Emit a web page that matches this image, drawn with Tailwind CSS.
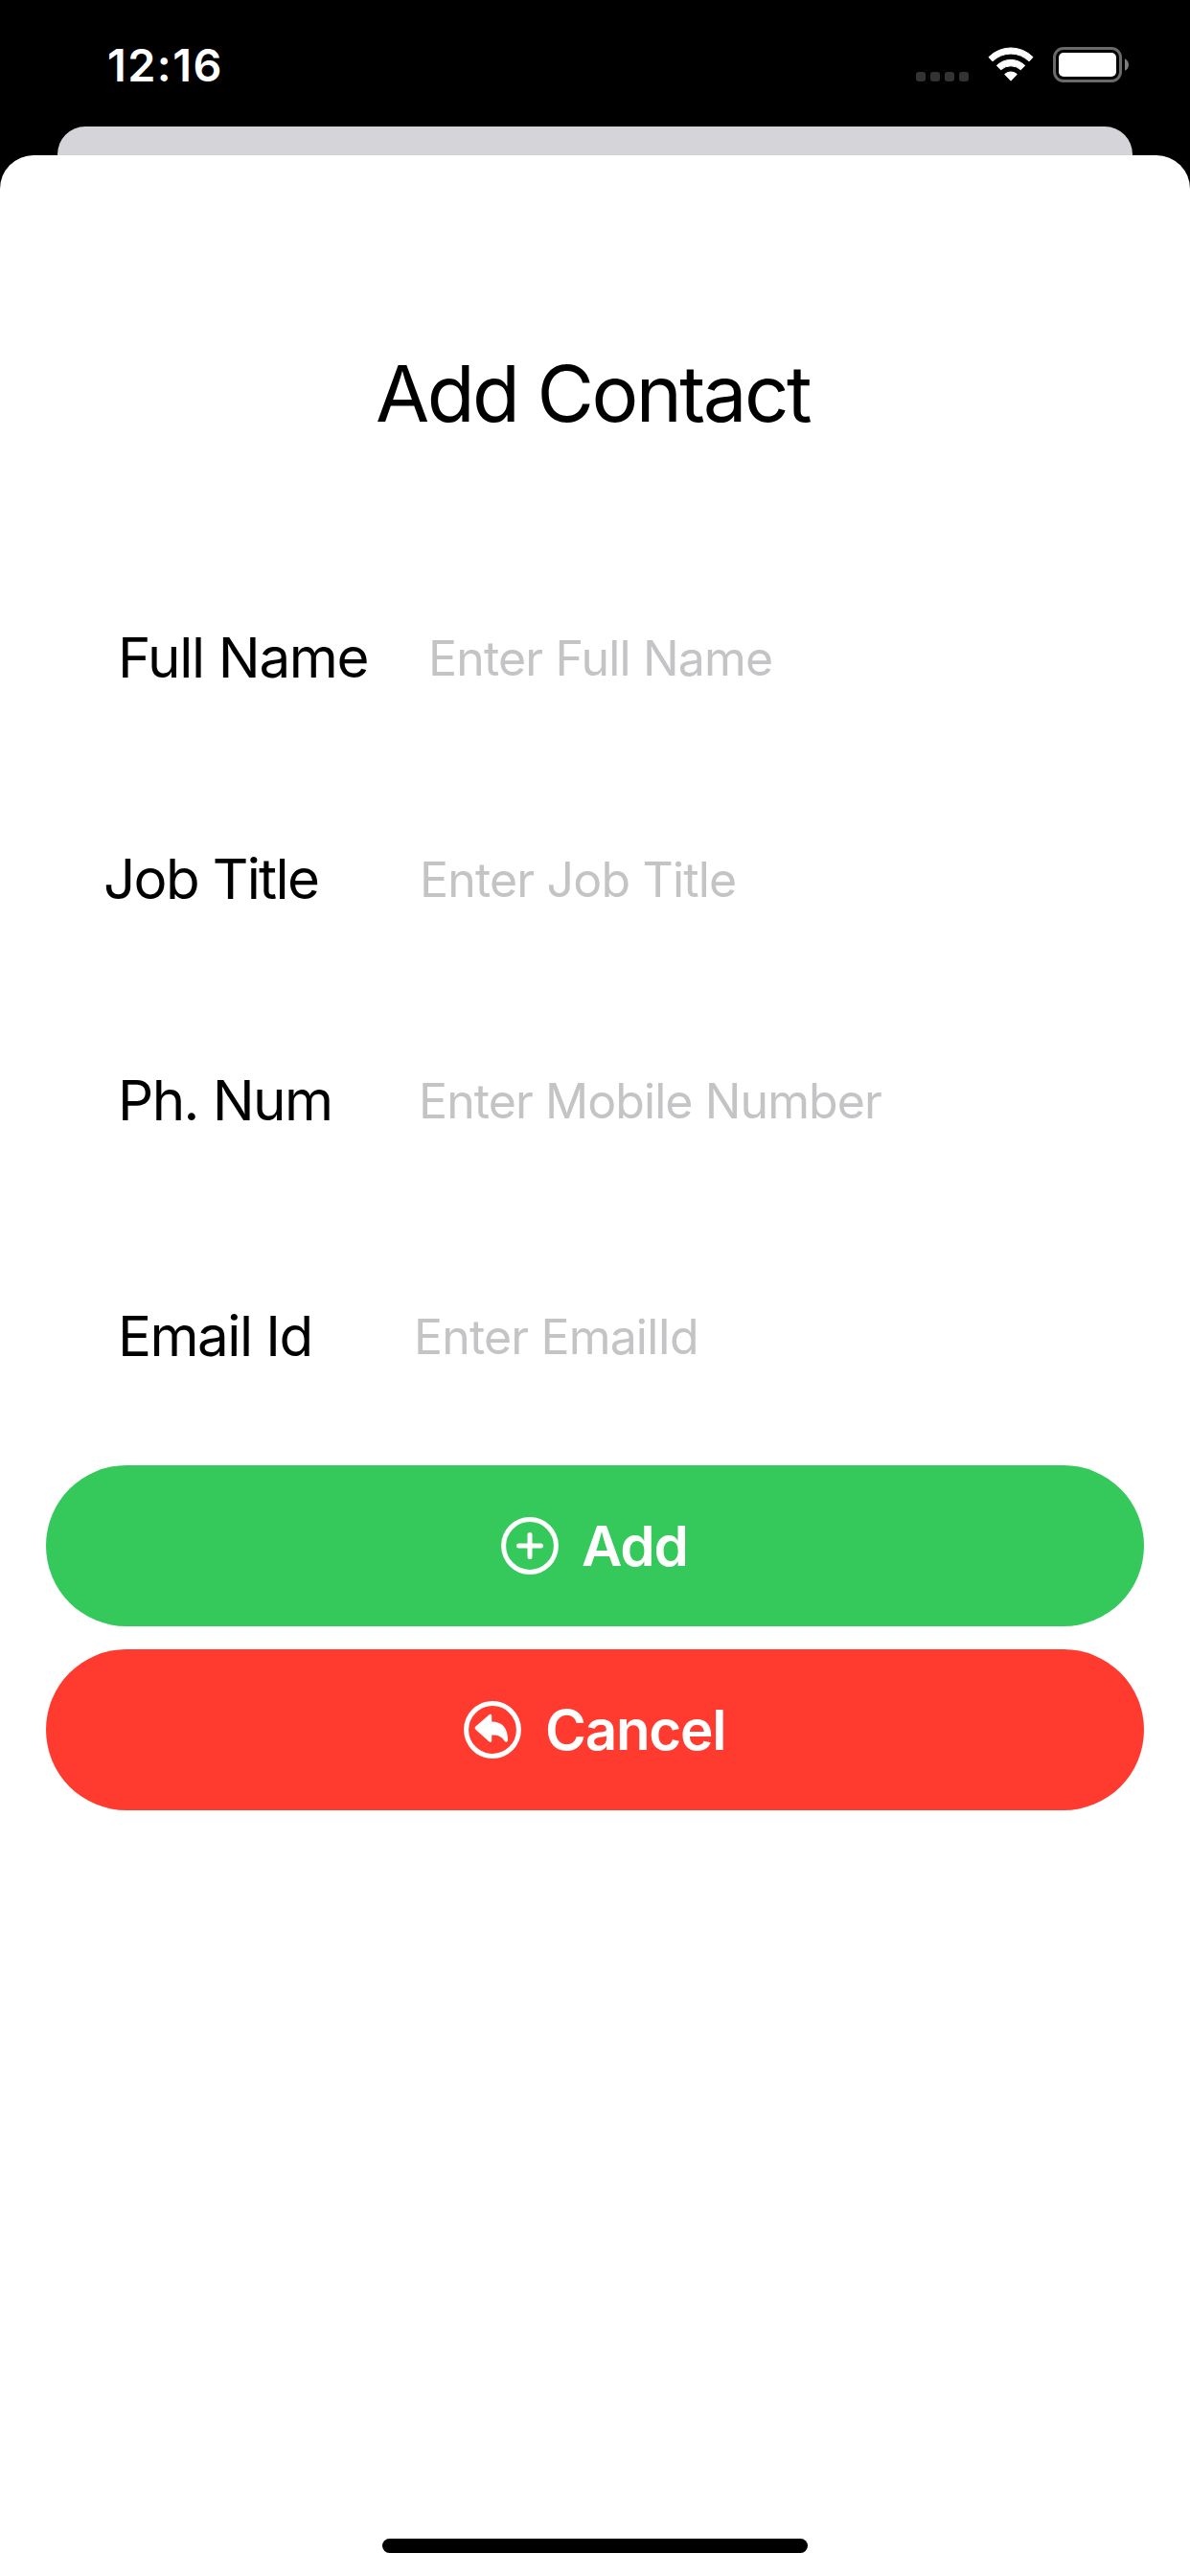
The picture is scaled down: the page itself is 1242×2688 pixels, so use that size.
<!DOCTYPE html>
<html lang="en">
<head>
<meta charset="utf-8">
<title>Add Contact</title>
<script src="https://cdn.jsdelivr.net/npm/@tailwindcss/browser@4"></script>
</head>
<body class="bg-black">
<div class="flex h-[2688px] w-[1242px] flex-col overflow-hidden bg-black font-['Inter',sans-serif] text-black">

  <!-- Status bar -->
  <header class="flex h-[132px] shrink-0 items-start justify-between pr-16 pl-[112px] text-white">
    <div class="mt-11 text-[46.8px] leading-[48px] font-semibold tracking-[1.46px]">12:16</div>
    <div class="mt-[49px] flex h-[37px]">
      <div class="mt-[26px] mr-5 flex gap-[5px]">
        <span class="size-[10px] rounded-[3px] bg-[#333]"></span>
        <span class="size-[10px] rounded-[3px] bg-[#333]"></span>
        <span class="size-[10px] rounded-[3px] bg-[#333]"></span>
        <span class="size-[10px] rounded-[3px] bg-[#333]"></span>
      </div>
      <svg class="mr-5 h-9 w-12" viewBox="0 0 48 36" fill="white" stroke="white" stroke-width="1" stroke-linejoin="round">
        <path d="M1 10.6A32.3 32.3 0 0 1 47 10.6L43 14.9A27 27 0 0 0 5 14.9Z"/>
        <path d="M9.3 19.4A21 21 0 0 1 38.7 19.4L34.4 23.8A15.5 15.5 0 0 0 13.6 23.8Z"/>
        <path d="M17.7 28.4A9.5 9.5 0 0 1 30.3 28.4L24 35.2Z"/>
      </svg>
      <svg class="h-[37px] w-[79px]" viewBox="0 0 79 37">
        <rect x="1.5" y="1.5" width="69" height="34" rx="9.5" fill="none" stroke="#6a6a6a" stroke-width="3"/>
        <rect x="6" y="6" width="60" height="25" rx="5" fill="white"/>
        <path d="M75 12.2C80.3 14.7 80.3 22.3 75 24.8Z" fill="#7d7d7d"/>
      </svg>
    </div>
  </header>

  <!-- Edge of the screen behind the sheet -->
  <div class="mx-[60px] h-[30px] shrink-0 rounded-t-[29px] bg-[#d5d4d9]"></div>

  <!-- Sheet -->
  <main class="flex grow flex-col rounded-t-[35px] bg-white pt-[200px]">
    <h1 class="h-[97px] pl-[392px] text-[81.5px] leading-[97px] tracking-[-2.6px] whitespace-nowrap">Add Contact</h1>

    <section class="mt-[187px] flex flex-col gap-[151px] whitespace-nowrap">
      <div class="flex h-20 pl-[123px]">
        <span class="w-[324px] text-[58.3px] leading-[80px] tracking-[-1.35px]">Full Name</span>
        <span class="text-[50px] leading-[82px] tracking-[-0.84px] text-[#c4c4c6]">Enter Full Name</span>
      </div>
      <div class="flex h-20 pl-[108px]">
        <span class="w-[330px] text-[58.3px] leading-[80px] tracking-[-1.66px]">Job Title</span>
        <span class="text-[50px] leading-[82px] tracking-[-0.82px] text-[#c4c4c6]">Enter Job Title</span>
      </div>
      <div class="flex h-20 pl-[123px]">
        <span class="w-[314px] text-[58.3px] leading-[80px] tracking-[-1.55px]">Ph. Num</span>
        <span class="text-[50px] leading-[82px] tracking-[-0.92px] text-[#c4c4c6]">Enter Mobile Number</span>
      </div>
      <div class="mt-[15px] flex h-20 pl-[123px]">
        <span class="w-[309px] text-[58.3px] leading-[80px] tracking-[-1.52px]">Email Id</span>
        <span class="text-[50px] leading-[82px] tracking-[-0.84px] text-[#c4c4c6]">Enter EmailId</span>
      </div>
    </section>

    <section class="mt-[95px] flex flex-col gap-6 px-12 text-[58.3px] leading-[80px] font-semibold text-white">
      <button class="flex h-[168px] items-center rounded-full bg-[#35c85a] pl-[475px]">
        <svg class="mr-6 size-[60px]" viewBox="-30 -30 60 60" fill="none" stroke="white" stroke-width="5" stroke-linecap="round">
          <circle r="27.4"/>
          <path d="M-11.5 0H11.5M0 -11.5V11.5"/>
        </svg>
        <span class="tracking-[-1.2px]">Add</span>
      </button>
      <button class="flex h-[168px] items-center rounded-full bg-[#ff3b30] pl-[436px]">
        <svg class="mr-[25px] size-[60px]" viewBox="-30 -30 60 60" fill="none">
          <circle r="27.4" stroke="white" stroke-width="5"/>
          <path d="M-17.6 -3.4L-3.6 -15.7C-2.3 -16.8 -0.8 -16.2 -0.8 -14.6V-8.4C9.5 -8.4 16 -2.5 16 10.8C16 13.2 13.6 13.4 12.4 11.5C9 6.5 6 5.5 -0.8 5.5V11.3C-0.8 12.9 -2.4 13.4 -3.7 12.2L-17.6 -0.3C-18.6 -1.2 -18.6 -2.5 -17.6 -3.4Z" fill="white"/>
        </svg>
        <span class="tracking-[-1.25px]">Cancel</span>
      </button>
    </section>

    <!-- Home indicator -->
    <div class="mx-auto mt-auto mb-6 h-[15px] w-[444px] shrink-0 rounded-full bg-black"></div>
  </main>
</div>
</body>
</html>
